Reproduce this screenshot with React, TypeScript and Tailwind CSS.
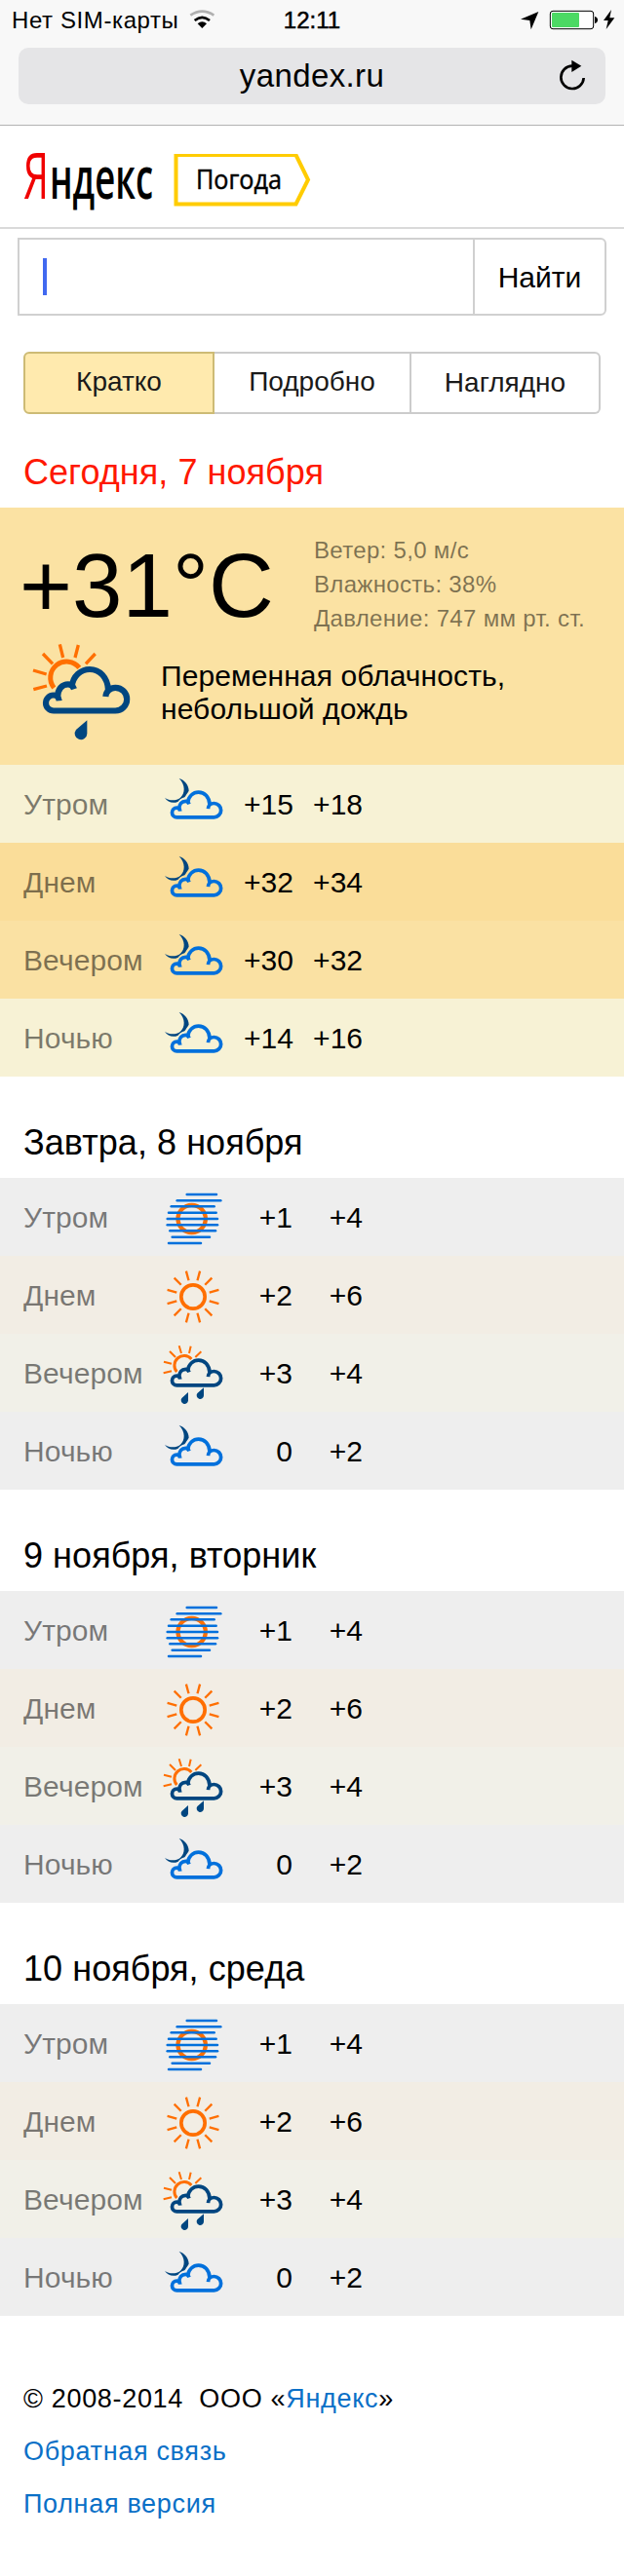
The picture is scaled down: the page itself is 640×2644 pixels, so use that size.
import React from "react";

const ORANGE = "#ff6f00";
const NAVY = "#004680";
const BLUE = "#0070dc";

type IconName = "fog" | "sun" | "rain" | "moon";

function CloudPath({ color }: { color: string }) {
  return (
    <g fill="none" stroke={color} strokeWidth="18.5" strokeLinejoin="round">
      <path d="M122 208 C121 197 114 190.500 105 190.500 A24 24 0 0 0 105 238.500 H295 A35.500 35.500 0 1 0 295 167.500 C280 167.500 266 178 265 195" />
      <path d="M117 197 C117 172 131 157 150 157 C158 157 164 160 168 172" />
      <path d="M161 165 C164 131 189 111 216 111 C247 111 271 136 273 174" />
    </g>
  );
}

function BigRainIcon() {
  return (
    <svg width="130" height="120" viewBox="0 0 390 360" className="block shrink-0">
      <g fill="none" stroke={ORANGE}>
        <path d="M106 168 A48 48 0 0 1 184 106" strokeWidth="15" />
        <path
          strokeWidth="10"
          d="M43 173 L84 162 M42 114 L83 126 M72 63 L102 94 M124 34 L134 75 M181 36 L171 75 M233 63 L204 94"
        />
      </g>
      <CloudPath color={NAVY} />
      <path fill={NAVY} d="M208 268 V309 A19 19 0 1 1 174 297 Z" />
    </svg>
  );
}

const FOG_LINES: [number, number, number][] = [
  [125, 216, 51],
  [95, 229, 70],
  [77, 209, 88],
  [69, 215, 107],
  [65, 219, 126],
  [65, 219, 145],
  [73, 213, 163],
  [80, 195, 182],
  [69, 168, 201],
];

function WeatherIcon({ name }: { name: IconName }) {
  return (
    <svg width="100" height="80" viewBox="0 0 300 240" className="block">
      {name === "fog" && (
        <>
          <circle cx="140" cy="126" r="42.500" fill="none" stroke={ORANGE} strokeWidth="13" />
          {FOG_LINES.map(([a, b, y]) => (
            <path key={y} d={`M${a} ${y} H${b}`} stroke={BLUE} strokeWidth="7.5" strokeLinecap="round" />
          ))}
        </>
      )}
      {name === "sun" && (
        <g fill="none" stroke={ORANGE}>
          <circle cx="144" cy="126" r="36.500" strokeWidth="11" />
          {[15, 45, 75, 105, 135, 165, 195, 225, 255, 285, 315, 345].map((a) => (
            <path key={a} d="M144 74 V44" strokeWidth="7" transform={`rotate(${a} 144 126)`} />
          ))}
        </g>
      )}
      {name === "rain" && (
        <>
          <g fill="none" stroke={ORANGE}>
            <path d="M94 117 A29 29 0 0 1 139 78" strokeWidth="9" />
            <path
              strokeWidth="6"
              d="M54 86 L78 92 M53 121 L78 115 M72 54 L90 72 M101 37 L108 60 M137 38 L132 60 M169 55 L151 72"
            />
          </g>
          <g transform="translate(30.6 14.5) scale(.603)">
            <CloudPath color={NAVY} />
          </g>
          <path fill={NAVY} d="M129 180 V205 A11 11 0 1 1 109.300 198.200 Z" />
          <path fill={NAVY} d="M177 166 V190 A11 11 0 1 1 157.300 183.200 Z" />
        </>
      )}
      {name === "moon" && (
        <>
          <path
            fill={NAVY}
            d="M101 42 C118 47 131 62 131 80 C126 88 122 94 118 100 C109 102 102 107 98 113 C82 121 66 115 57 101 C72 112 92 111 105 101 C120 88 121 62 101 42 Z"
          />
          <g transform="translate(30.6 17.5) scale(.603)">
            <CloudPath color={BLUE} />
          </g>
        </>
      )}
    </svg>
  );
}

type Row = { label: string; icon: IconName; from: string; to: string; bg: string };

const TODAY: Row[] = [
  { label: "Утром", icon: "moon", from: "+15", to: "+18", bg: "bg-[#f7f2d5]" },
  { label: "Днем", icon: "moon", from: "+32", to: "+34", bg: "bg-[#fadd99]" },
  { label: "Вечером", icon: "moon", from: "+30", to: "+32", bg: "bg-[#fae1a3]" },
  { label: "Ночью", icon: "moon", from: "+14", to: "+16", bg: "bg-[#f7f2d5]" },
];

const FORECAST: Row[] = [
  { label: "Утром", icon: "fog", from: "+1", to: "+4", bg: "bg-[#eeeeee]" },
  { label: "Днем", icon: "sun", from: "+2", to: "+6", bg: "bg-[#f2ede4]" },
  { label: "Вечером", icon: "rain", from: "+3", to: "+4", bg: "bg-[#f1f0e8]" },
  { label: "Ночью", icon: "moon", from: "0", to: "+2", bg: "bg-[#eeeeee]" },
];

function Rows({ rows }: { rows: Row[] }) {
  return (
    <div>
      {rows.map((r) => (
        <div
          key={r.label}
          className={`grid h-20 grid-cols-[126px_100px_50px_72px] pl-6 text-[30px] leading-[81px] whitespace-nowrap ${r.bg}`}
        >
          <div className="tracking-[0.1px] text-black/50">{r.label}</div>
          <WeatherIcon name={r.icon} />
          <div className="text-right">{r.from}</div>
          <div className="text-right">{r.to}</div>
        </div>
      ))}
    </div>
  );
}

function DayTitle({ children }: { children: React.ReactNode }) {
  return <h2 className="h-[104px] pt-[47px] pl-6 text-[36px] leading-[41px] tracking-[0.05px]">{children}</h2>;
}

export default function App() {
  return (
    <div className="h-[2644px] w-[640px] overflow-hidden bg-white font-['Liberation_Sans',Arial,sans-serif] text-black">
      <div className="h-[129px] border-b border-[#b2b2b2] bg-[#f8f8f8]">
        <div className="grid h-[49px] grid-cols-[1fr_60px_1fr] leading-[41px]">
          <div className="flex pl-[12px]">
            <span className="text-[24px] tracking-[0.6px]">Нет SIM-карты</span>
            <svg width="26" height="20" viewBox="0 0 78 60" className="mt-[10px] ml-[11px]">
              <g fill="none" strokeWidth="8">
                <path d="M4 17 Q40 -7 76 17" stroke="#b0b0b0" />
                <path d="M17 33 Q40 14 63 33" stroke="#000" />
              </g>
              <path d="M26 43 Q40 30 54 43 L40 57 Z" />
            </svg>
          </div>
          <div className="text-center text-[24px] [-webkit-text-stroke:0.5px_black]">12:11</div>
          <div className="flex justify-end">
            <svg width="120" height="40" viewBox="0 0 360 120">
              <path d="M42 59 L97 36 L74 91 L70 63 Z" />
              <rect x="133" y="34" width="133" height="55" rx="8" fill="#fff" stroke="#000" strokeWidth="3" />
              <rect x="138" y="39" width="84" height="45" rx="3" fill="#4cd964" />
              <path d="M270 51 C282 52 282 71 270 72 Z" />
              <path d="M321 30 L297 63 H311 L305 90 L331 55 H316 Z" />
            </svg>
          </div>
        </div>
        <div className="mr-[19px] ml-[19px] flex h-[58px] items-center rounded-[10px] bg-[#e5e5e7]">
          <div className="flex-1 pl-[57px] text-center text-[33px] leading-[58px] tracking-[0.4px]">yandex.ru</div>
          <svg width="60" height="58" viewBox="-3 0 180 174" className="-ml-[3px]">
            <path d="M110 93 A35 35 0 1 1 75 56" fill="none" stroke="#000" strokeWidth="8" />
            <path d="M73 38 L103 56 L73 75 Z" />
          </svg>
        </div>
      </div>

      <div className="flex h-[106px] items-start border-b-2 border-[#dadada] pl-[24px]">
        <svg width="140" height="104" viewBox="0 0 140 104" className="font-['Open_Sans',sans-serif]">
          <text x="0" y="75" fontSize="65" textLength="26" lengthAdjust="spacingAndGlyphs" fill="#f00000">
            Я
          </text>
          <text x="27" y="75" fontSize="60" textLength="106" lengthAdjust="spacingAndGlyphs" fontWeight="600">
            ндекс
          </text>
        </svg>
        <svg width="142" height="56" viewBox="0 0 142 56" className="mt-[29px] ml-[14px] font-['Open_Sans',sans-serif]">
          <path d="M2.500 1 H125.500 L138 26.500 L125.500 51.500 H2.500 Z" fill="#fff" stroke="#fc0" strokeWidth="4" />
          <text
            x="23"
            y="36"
            fontSize="27"
            textLength="88"
            lengthAdjust="spacingAndGlyphs"
            stroke="#000"
            strokeWidth=".5"
          >
            Погода
          </text>
        </svg>
      </div>

      <div className="mt-[9px] ml-[18px] flex h-[80px] w-[604px] rounded-r-[6px] border-2 border-[#d0d0d0]">
        <div className="flex w-[467px] border-r-2 border-[#d0d0d0] pt-[19px] pl-6">
          <div className="h-[38px] w-1 bg-[#4169f0]" />
        </div>
        <button className="flex-1 text-[30px] leading-[75px]">Найти</button>
      </div>

      <div className="mt-[37px] ml-6 flex h-[64px] w-[592px] text-[28px] leading-[57px] text-[#1a1a1a]">
        <div className="w-[196px] rounded-l-[6px] border-2 border-[#cdbb75] bg-[#ffeaae] text-center">Кратко</div>
        <div className="w-[202px] border-y-2 border-r-2 border-[#ccc] text-center">Подробно</div>
        <div className="flex-1 rounded-r-[6px] border-y-2 border-r-2 border-[#ccc] text-center leading-[59px]">Наглядно</div>
      </div>

      <h2 className="h-[96px] pt-[39px] pl-6 text-[36px] leading-[41px] tracking-[0.05px] text-[#ff1800]">Сегодня, 7 ноября</h2>
      <section className="h-[264px] bg-[#fbe2a3]">
        <div className="flex h-[129px]">
          <div className="w-[322px] pt-[28px] pl-[20px] text-[92.5px] leading-[104px] whitespace-nowrap">+31°C</div>
          <div className="pt-[26px] text-[24px] leading-[35px] tracking-[0.32px] whitespace-nowrap text-black/50">
            <p>Ветер: 5,0 м/с</p>
            <p>Влажность: 38%</p>
            <p>Давление: 747 мм рт. ст.</p>
          </div>
        </div>
        <div className="flex pl-5">
          <BigRainIcon />
          <p className="pt-[27px] pl-[15px] text-[30px] leading-[34px] tracking-[0.1px] whitespace-nowrap">
            Переменная облачность,
            <br />
            небольшой дождь
          </p>
        </div>
      </section>
      <Rows rows={TODAY} />

      {["Завтра, 8 ноября", "9 ноября, вторник", "10 ноября, среда"].map((title) => (
        <section key={title}>
          <DayTitle>{title}</DayTitle>
          <Rows rows={FORECAST} />
        </section>
      ))}

      <footer className="flex flex-col items-start pt-[58px] pl-6 text-[27px] leading-[54px] tracking-[0.68px] whitespace-pre">
        <p>
          {"© 2008-2014  ООО «"}
          <a className="text-[#0a70c7]">Яндекс</a>»
        </p>
        <a className="text-[#0a70c7]">Обратная связь</a>
        <a className="text-[#0a70c7]">Полная версия</a>
      </footer>
    </div>
  );
}
